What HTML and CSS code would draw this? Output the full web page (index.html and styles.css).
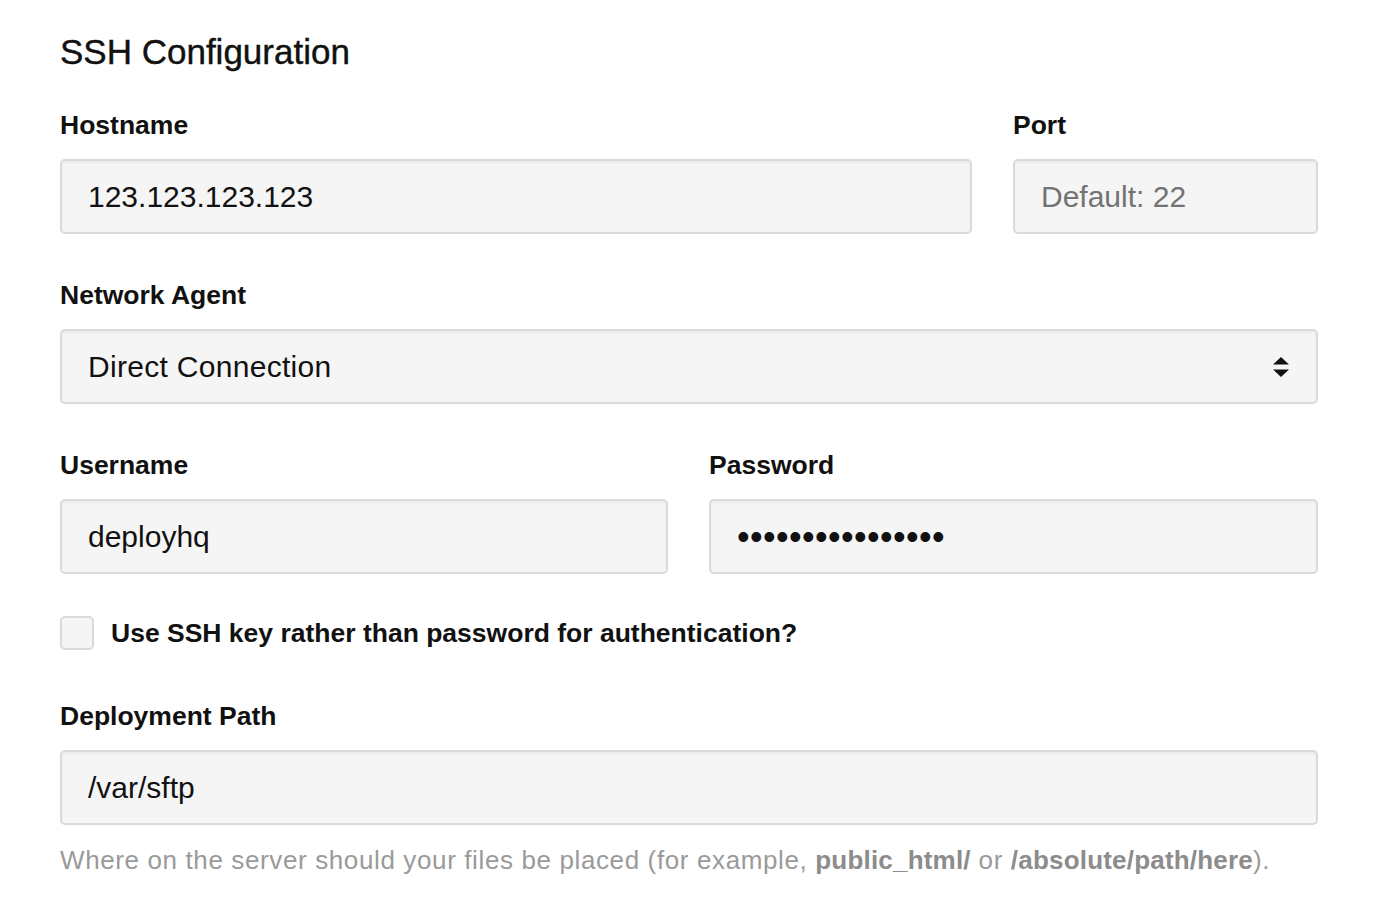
FILE: index.html
```html
<!DOCTYPE html>
<html lang="en">
<head>
<meta charset="utf-8">
<title>SSH Configuration</title>
<link rel="stylesheet" href="styles.css">
</head>
<body>
<form class="panel">
  <h1 class="title">SSH Configuration</h1>

  <div class="row row-host">
    <div class="field">
      <label class="label" for="hostname">Hostname</label>
      <input class="input" id="hostname" type="text" value="123.123.123.123">
    </div>
    <div class="field">
      <label class="label" for="port">Port</label>
      <input class="input" id="port" type="text" placeholder="Default: 22">
    </div>
  </div>

  <div class="field">
    <label class="label" for="agent">Network Agent</label>
    <div class="select">
      <span class="select-value">Direct Connection</span>
      <svg class="select-arrows" width="18" height="24" viewBox="0 0 18 24" aria-hidden="true">
        <path d="M9 2 L17 9.5 L1 9.5 Z" fill="#111"/>
        <path d="M1 14.5 L17 14.5 L9 22 Z" fill="#111"/>
      </svg>
    </div>
  </div>

  <div class="row row-half">
    <div class="field">
      <label class="label" for="username">Username</label>
      <input class="input" id="username" type="text" value="deployhq">
    </div>
    <div class="field">
      <label class="label" for="password">Password</label>
      <input class="input input-password" id="password" type="password" value="abcdefghijklmnop">
    </div>
  </div>

  <label class="check">
    <span class="checkbox"></span>
    <span class="check-label">Use SSH key rather than password for authentication?</span>
  </label>

  <div class="field field-last">
    <label class="label" for="path">Deployment Path</label>
    <input class="input" id="path" type="text" value="/var/sftp">
    <p class="hint">Where on the server should your files be placed (for example, <b>public_html/</b> or <b>/absolute/path/here</b>).</p>
  </div>
</form>
</body>
</html>
```

FILE: styles.css
```css
html, body {
  margin: 0;
  padding: 0;
  background: #ffffff;
}

body {
  font-family: "Liberation Sans", Arial, sans-serif;
  color: #111111;
}

.panel {
  width: 1258px;
  padding: 32px 0 0 60px;
  display: flex;
  flex-direction: column;
}

.title {
  margin: 0 0 38px 0;
  font-size: 35px;
  line-height: 40px;
  font-weight: 400;
  color: #111;
  -webkit-text-stroke: 0.4px #111;
}

.row {
  display: grid;
  column-gap: 41px;
}

.row-host {
  grid-template-columns: 912px 1fr;
}

.row-half {
  grid-template-columns: 608px 1fr;
}

.field {
  display: flex;
  flex-direction: column;
  margin-bottom: 46px;
}

.label {
  font-size: 26.5px;
  line-height: 30px;
  font-weight: 700;
  color: #111;
  margin-bottom: 19px;
}

.input,
.select {
  box-sizing: border-box;
  height: 75px;
  width: 100%;
  margin: 0;
  padding: 0 26px;
  border: 2px solid #dadada;
  border-radius: 5px;
  background: #f5f5f5;
  box-shadow: inset 0 2px 2px rgba(0, 0, 0, 0.04);
  font-family: "Liberation Sans", Arial, sans-serif;
  font-size: 30px;
  color: #111;
  outline: none;
}

.input::placeholder {
  color: #737373;
  opacity: 1;
}

.input-password {
  font-size: 36px;
  letter-spacing: 0.4px;
}

.select {
  display: flex;
  align-items: center;
  justify-content: space-between;
  padding-right: 26px;
}

.select-value {
  letter-spacing: 0.3px;
}

.select-arrows {
  display: block;
}

.check {
  display: flex;
  align-items: center;
  gap: 17px;
  margin-top: -4px;
  margin-bottom: 51px;
}

.checkbox {
  box-sizing: border-box;
  width: 34px;
  height: 34px;
  border: 2px solid #dadada;
  border-radius: 5px;
  background: #f5f5f5;
}

.check-label {
  font-size: 26.5px;
  line-height: 30px;
  font-weight: 700;
  color: #111;
}

.field-last {
  margin-bottom: 0;
}

.hint {
  margin: 20px 0 0 0;
  font-size: 26px;
  line-height: 30px;
  letter-spacing: 0.62px;
  color: #9a9a9a;
}

.hint b {
  font-weight: 700;
  color: #8c8c8c;
  letter-spacing: 0.2px;
}
```
